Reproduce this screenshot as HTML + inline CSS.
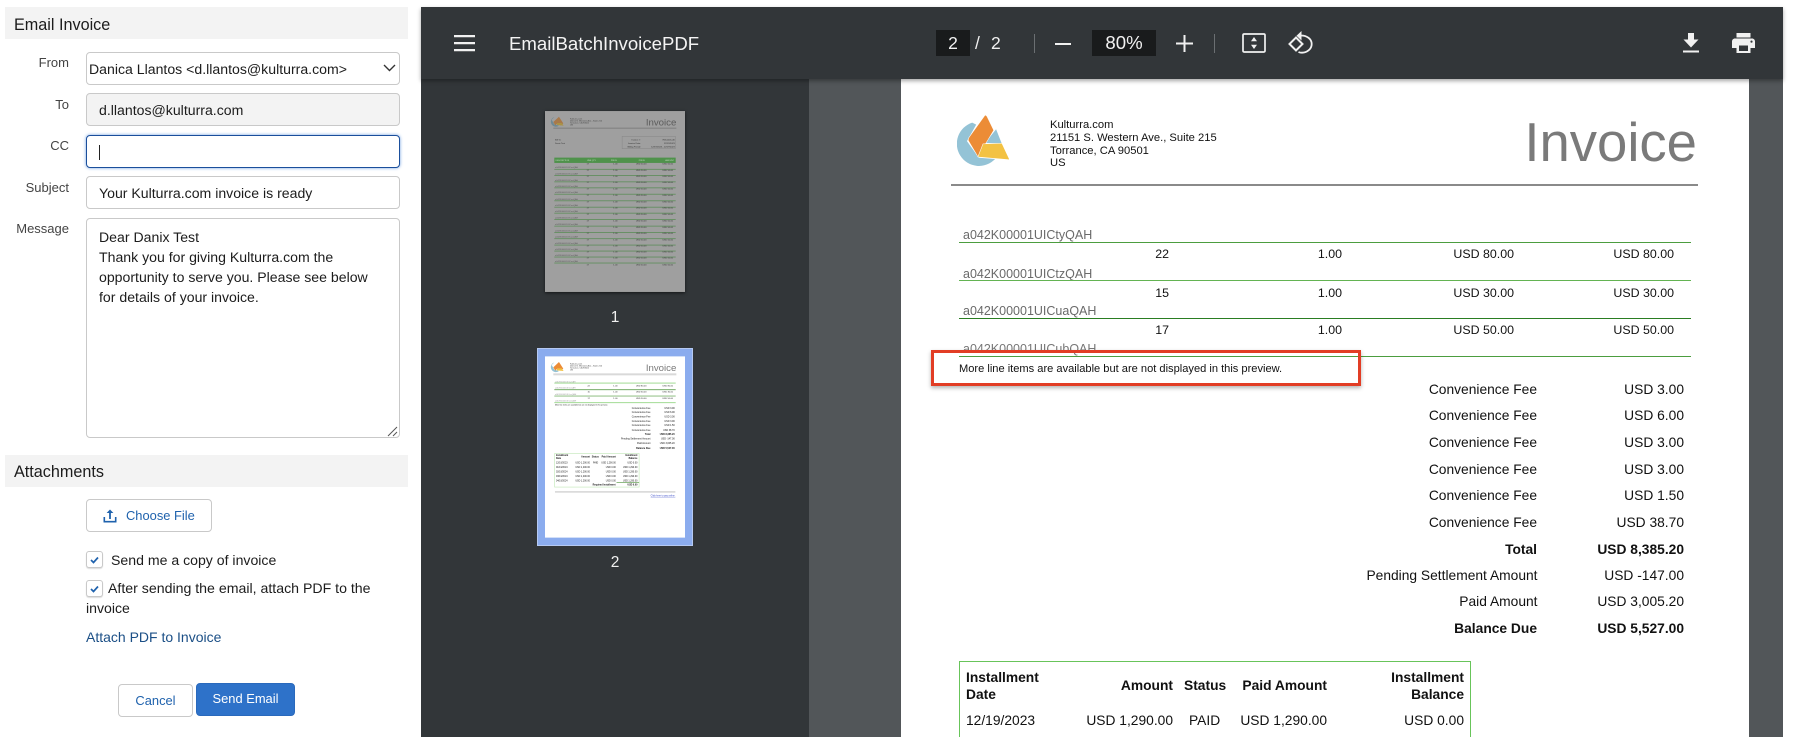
<!DOCTYPE html>
<html lang="en"><head><meta charset="utf-8"><title>Email Invoice</title>
<style>
html,body{margin:0;padding:0;background:#fff}
body{width:1793px;height:756px;position:relative;overflow:hidden;font-family:"Liberation Sans",sans-serif;color:#1c1c1c}
.a{position:absolute;white-space:nowrap;line-height:20px}
.box{position:absolute;box-sizing:border-box;background:#fff;border:1px solid #c9c9c9;border-radius:4px;left:86px;width:314px;height:33px}
.lb{right:1724px;font-size:13px;color:#444}
.in{left:99px;font-size:14.1px}
.bar{position:absolute;left:5px;width:403px;height:32px;background:#f3f3f3}
.pg{position:absolute;left:901px;width:848px;top:79px;height:658px;background:#fff}
.n{font-size:12.5px;color:#6a6a6a;left:963px}
.v{font-size:12.4px;color:#111}
.gl{position:absolute;left:959px;width:732px;height:1px;background:#4c9d3f}
.f{font-size:13.8px;color:#111}
.b{font-weight:bold}
svg{position:absolute;display:block}
svg text{font-family:"Liberation Sans",sans-serif}
</style></head><body>

<!-- LEFT PANEL -->
<div class="bar" style="top:7px"></div>
<div class="a" style="left:14px;top:15px;font-size:16.2px">Email Invoice</div>

<div class="a lb" style="top:53px">From</div>
<div class="box" style="top:52px"></div>
<div class="a" style="left:89px;top:59px;font-size:14.1px">Danica Llantos &lt;d.llantos@kulturra.com&gt;</div>
<svg style="left:383px;top:63px" width="13" height="10" viewBox="0 0 13 10"><path d="M1 2l5.500 5.500L12 2" fill="none" stroke="#333" stroke-width="1.400"/></svg>

<div class="a lb" style="top:95px">To</div>
<div class="box" style="top:93px;background:#f3f3f3"></div>
<div class="a in" style="top:100px">d.llantos@kulturra.com</div>

<div class="a lb" style="top:136px">CC</div>
<div class="box" style="top:135px;border-color:#1b4f9c;box-shadow:0 0 3px #6f9fe0"></div>
<div style="position:absolute;left:99px;top:145px;width:1px;height:15px;background:#222"></div>

<div class="a lb" style="top:178px">Subject</div>
<div class="box" style="top:176px"></div>
<div class="a in" style="top:183px">Your Kulturra.com invoice is ready</div>

<div class="a lb" style="top:219px">Message</div>
<div class="box" style="top:218px;height:220px"></div>
<div class="a in" style="top:227px">Dear Danix Test</div>
<div class="a in" style="top:247px">Thank you for giving Kulturra.com the</div>
<div class="a in" style="top:267px">opportunity to serve you. Please see below</div>
<div class="a in" style="top:287px">for details of your invoice.</div>
<svg style="left:387px;top:425px" width="12" height="12" viewBox="0 0 12 12"><path d="M1 11L10 2M6 11L10 7" stroke="#555" stroke-width="1" fill="none"/></svg>

<div class="bar" style="top:455px"></div>
<div class="a" style="left:14px;top:462px;font-size:16.2px">Attachments</div>

<div class="box" style="top:499px;width:126px"></div>
<svg style="left:102px;top:508px" width="16" height="16" viewBox="0 0 16 16"><path d="M8 1.500L4.600 5h2.500v6h1.800V5h2.500zM1.500 9v5.500h13V9h-1.600v3.900H3.100V9z" fill="#1f62ad"/></svg>
<div class="a" style="left:126px;top:506px;font-size:12.9px;color:#1f62ad">Choose File</div>

<div class="box" style="top:551px;width:17px;height:17px;border-radius:3px;box-shadow:0 1px 1px #ddd"></div>
<svg style="left:88px;top:553px" width="13" height="13" viewBox="0 0 13 13"><path d="M3 7l2.500 2.500L10 4.500" fill="none" stroke="#1f62ad" stroke-width="1.700"/></svg>
<div class="a" style="left:111px;top:550px;font-size:14.1px">Send me a copy of invoice</div>

<div class="box" style="top:580px;width:17px;height:17px;border-radius:3px;box-shadow:0 1px 1px #ddd"></div>
<svg style="left:88px;top:582px" width="13" height="13" viewBox="0 0 13 13"><path d="M3 7l2.500 2.500L10 4.500" fill="none" stroke="#1f62ad" stroke-width="1.700"/></svg>
<div class="a" style="left:108px;top:577.500px;font-size:14.15px">After sending the email, attach PDF to the</div>
<div class="a" style="left:86px;top:597.500px;font-size:14.1px">invoice</div>
<div class="a" style="left:86px;top:627px;font-size:14px;color:#1b4f86">Attach PDF to Invoice</div>

<div class="box" style="left:118px;top:684px;width:75px;height:33px"></div>
<div class="a" style="left:118px;width:75px;text-align:center;top:691px;font-size:12.9px;color:#1f62ad">Cancel</div>
<div class="box" style="left:196px;top:683px;width:99px;height:33px;background:#2e72c9;border-color:#2a69bc"></div>
<div class="a" style="left:196px;width:99px;text-align:center;top:689px;font-size:12.9px;color:#fff">Send Email</div>

<!-- VIEWER -->
<div style="position:absolute;left:421px;top:7px;width:1362px;height:730px;background:#525659"></div>
<div style="position:absolute;left:421px;top:79px;width:388px;height:658px;background:#323639"></div>
<div class="pg"></div>
<div style="position:absolute;left:421px;top:7px;width:1362px;height:72px;background:#323639;box-shadow:0 2px 4px rgba(0,0,0,.35)"></div>

<svg style="left:454px;top:35px" width="21" height="17" viewBox="0 0 21 17"><path d="M0 0h21v2.200H0zM0 7h21v2.200H0zM0 14h21v2.200H0z" fill="#f1f1f1"/></svg>
<div class="a" style="left:509px;top:34px;font-size:18.6px;color:#f4f4f4">EmailBatchInvoicePDF</div>

<div style="position:absolute;left:936px;top:30px;width:34px;height:26px;background:#191b1c"></div>
<div class="a" style="left:936px;width:34px;text-align:center;top:33px;font-size:17.5px;color:#f1f1f1">2</div>
<div class="a" style="left:975px;top:33px;font-size:17.5px;color:#f1f1f1">/</div>
<div class="a" style="left:991px;top:33px;font-size:17.5px;color:#f1f1f1">2</div>
<div style="position:absolute;left:1034px;top:34px;width:1px;height:19px;background:#6b6f72"></div>
<div style="position:absolute;left:1055px;top:43px;width:16px;height:2px;background:#f1f1f1"></div>
<div style="position:absolute;left:1092px;top:30px;width:64px;height:26px;background:#191b1c"></div>
<div class="a" style="left:1092px;width:64px;text-align:center;top:33px;font-size:18.6px;color:#f1f1f1">80%</div>
<svg style="left:1176px;top:35px" width="17" height="17" viewBox="0 0 17 17"><path d="M7.500 0h2v7.500H17v2H9.500V17h-2V9.500H0v-2h7.500z" fill="#f1f1f1"/></svg>
<div style="position:absolute;left:1214px;top:34px;width:1px;height:19px;background:#6b6f72"></div>

<svg style="left:1242px;top:33px" width="24" height="20" viewBox="0 0 24 20"><rect x="1" y="1" width="22" height="18" rx="1.200" fill="none" stroke="#f1f1f1" stroke-width="1.700"/><path d="M12 4l3 4.200H9zM12 16l-3-4.200h6z" fill="#f1f1f1"/></svg>
<svg style="left:1288px;top:30px" width="26" height="24" viewBox="0 0 26 24"><path d="M8 7.500l6.500 6.500L8 20.500 1.500 14z" fill="none" stroke="#f1f1f1" stroke-width="2"/><path d="M13 5.500C19 5.500 23.700 9 23.700 14 23.700 19 19 22.700 14 22.700 12.500 22.700 11.500 22.500 10.500 22" fill="none" stroke="#f1f1f1" stroke-width="1.800"/><path d="M13.500 1v9.500L8.500 5.700z" fill="#f1f1f1"/></svg>
<svg style="left:1683px;top:33px" width="16" height="20" viewBox="0 0 16 20"><path d="M5 0h6v6.500h4.500L8 14.500.5 6.500H5zM0 17.500h16V19.500H0z" fill="#f1f1f1"/></svg>
<svg style="left:1732px;top:33px" width="23" height="20" viewBox="0 0 23 20"><path d="M4.500 0h14v4.500h-14zM3 5.500h17c1.700 0 3 1.300 3 3V15h-4.500v5h-14v-5H0V8.500c0-1.700 1.300-3 3-3zM7 12.500V18h9V12.500zM19.500 7.500a1.100 1.100 0 1 0 0 2.200 1.100 1.100 0 0 0 0-2.200z" fill="#f1f1f1" fill-rule="evenodd"/></svg>

<!-- THUMB 1 -->
<svg style="left:545px;top:111px;box-shadow:0 1px 3px rgba(0,0,0,.6)" width="140" height="181" viewBox="0 0 421 544">
<rect width="421" height="544" fill="#9f9f9f"/>
<path d="M28 18a15 15 0 1 0 14 26l-14-4-8-14z" fill="#6e8a95"/><path d="M42 17l13 20-8 6-10-6-6 6-6-10z" fill="#a8794a"/><path d="M36 36h14l6 8-20-2z" fill="#aa9244"/>
<g fill="#3c3c3c" font-size="6.500"><text x="75" y="25">Kulturra.com</text><text x="75" y="31">21151 S. Western Ave., Suite 215</text><text x="75" y="37">Torrance, CA 90501</text><text x="75" y="43">US</text></g>
<text x="395" y="43" font-size="29" fill="#5c5c5c" text-anchor="end">Invoice</text>
<rect x="25" y="50" width="370" height="3" fill="#7f7f7f"/>
<g fill="#333" font-size="6.500"><text x="30" y="88">Bill To:</text><text x="30" y="99">Danix Test</text></g>
<rect x="232" y="76" width="160" height="37" fill="none" stroke="#878787" stroke-width="1.500"/>
<g fill="#2c2c2c" font-size="6.500" text-anchor="end"><text x="288" y="88">Invoice #:</text><text x="390" y="88">INV-0001-46</text><text x="288" y="99">Invoice Date:</text><text x="390" y="99">12/19/2023</text><text x="288" y="110">Billing Period:</text><text x="390" y="110">12/19/2023 - 12/19/2023</text></g>
<rect x="28" y="140" width="365" height="16" fill="#4f924b"/>
<g fill="#c8dcc6" font-size="6"><text x="32" y="150">DESCRIPTION</text><text x="126" y="150">LINE QTY</text><text x="198" y="150">PRICE</text><text x="282" y="150">PRICE</text><text x="362" y="150">AMOUNT</text></g>
<defs><g id="r1"><g fill="#2f2f2f" font-size="6.500" text-anchor="end"><text x="132" y="0">17</text><text x="218" y="0">1.00</text><text x="305" y="0">USD 50.00</text><text x="385" y="0">USD 50.00</text></g><text x="30" y="11" font-size="6.500" fill="#5a5a5a">a042K00001UICuaQAH</text><rect x="28" y="13" width="365" height="2" fill="#4f8a4b"/></g></defs>
<use href="#r1" y="161"/><use href="#r1" y="180"/><use href="#r1" y="199"/><use href="#r1" y="217"/><use href="#r1" y="236"/><use href="#r1" y="256"/><use href="#r1" y="275"/><use href="#r1" y="293"/><use href="#r1" y="312"/><use href="#r1" y="332"/><use href="#r1" y="351"/><use href="#r1" y="370"/><use href="#r1" y="389"/><use href="#r1" y="407"/><use href="#r1" y="425"/><use href="#r1" y="443"/>
<g fill="#2f2f2f" font-size="6.500" text-anchor="end"><text x="132" y="464">17</text><text x="218" y="464">1.00</text><text x="305" y="464">USD 50.00</text><text x="385" y="464">USD 50.00</text></g>
</svg>
<div class="a" style="left:545px;width:140px;text-align:center;top:308px;font-size:15.500px;color:#f1f1f1">1</div>

<!-- THUMB 2 -->
<div style="position:absolute;left:537px;top:348px;width:156px;height:198px;background:#8bacee;box-shadow:inset 0 0 0 1px #b5c9f2"></div>
<svg style="left:545px;top:356px" width="140" height="182" viewBox="0 0 421 545">
<rect width="421" height="545" fill="#fff"/>
<path d="M28 18a15 15 0 1 0 14 26l-14-4-8-14z" fill="#94c3d6"/><path d="M42 17l13 20-8 6-10-6-6 6-6-10z" fill="#ec8c36"/><path d="M36 36h14l6 8-20-2z" fill="#f3c243"/>
<g fill="#333" font-size="6.500"><text x="75" y="25">Kulturra.com</text><text x="75" y="31">21151 S. Western Ave., Suite 215</text><text x="75" y="37">Torrance, CA 90501</text><text x="75" y="43">US</text></g>
<text x="395" y="44" font-size="29" fill="#7a7a7a" text-anchor="end">Invoice</text>
<rect x="25" y="51" width="370" height="6" fill="#d9d9d9"/>
<g font-size="6" fill="#999"><text x="30" y="78">a042K00001UICtyQAH</text><text x="30" y="97">a042K00001UICtzQAH</text><text x="30" y="116">a042K00001UICuaQAH</text><text x="30" y="135">a042K00001UICubQAH</text></g>
<rect x="28" y="79" width="365" height="2.500" fill="#8fd47f"/><rect x="28" y="99" width="365" height="2.500" fill="#589a47"/><rect x="28" y="118" width="365" height="2.500" fill="#78b36a"/><rect x="28" y="138" width="365" height="2.500" fill="#8fd47f"/>
<g fill="#222" font-size="6.500" text-anchor="end"><text x="135" y="90">22</text><text x="218" y="90">1.00</text><text x="305" y="90">USD 80.00</text><text x="385" y="90">USD 80.00</text><text x="135" y="109">15</text><text x="218" y="109">1.00</text><text x="305" y="109">USD 30.00</text><text x="385" y="109">USD 30.00</text><text x="135" y="128">17</text><text x="218" y="128">1.00</text><text x="305" y="128">USD 50.00</text><text x="385" y="128">USD 50.00</text></g>
<text x="30" y="147" font-size="5.500" fill="#111">More line items are available but are not displayed in this preview.</text>
<g fill="#111" font-size="7.200" text-anchor="end"><text x="317" y="158">Convenience Fee</text><text x="390" y="158">USD 3.00</text><text x="317" y="171">Convenience Fee</text><text x="390" y="171">USD 6.00</text><text x="317" y="184">Convenience Fee</text><text x="390" y="184">USD 3.00</text><text x="317" y="197">Convenience Fee</text><text x="390" y="197">USD 3.00</text><text x="317" y="210">Convenience Fee</text><text x="390" y="210">USD 1.50</text><text x="317" y="224">Convenience Fee</text><text x="390" y="224">USD 38.70</text><text x="317" y="237" font-weight="bold">Total</text><text x="390" y="237" font-weight="bold">USD 8,385.20</text><text x="317" y="250">Pending Settlement Amount</text><text x="390" y="250">USD -147.00</text><text x="317" y="264">Paid Amount</text><text x="390" y="264">USD 3,005.20</text><text x="317" y="278" font-weight="bold">Balance Due</text><text x="390" y="278" font-weight="bold">USD 5,527.00</text></g>
<rect x="29" y="292" width="254" height="101" fill="none" stroke="#c5eabb" stroke-width="2"/>
<g fill="#111" font-size="7"><text x="33" y="300" font-weight="bold">Installment</text><text x="33" y="308" font-weight="bold">Date</text><text x="33" y="322">12/19/2023</text><text x="33" y="335">01/19/2024</text><text x="33" y="349">02/19/2024</text><text x="33" y="363">03/19/2024</text><text x="33" y="376">04/19/2024</text></g>
<g fill="#111" font-size="7" text-anchor="end"><text x="135" y="304" font-weight="bold">Amount</text><text x="162" y="304" font-weight="bold">Status</text><text x="213" y="304" font-weight="bold">Paid Amount</text><text x="278" y="300" font-weight="bold">Installment</text><text x="278" y="308" font-weight="bold">Balance</text><text x="135" y="322">USD 1,290.00</text><text x="160" y="322">PAID</text><text x="213" y="322">USD 1,290.00</text><text x="278" y="322">USD 0.00</text><text x="135" y="335">USD 1,290.00</text><text x="213" y="335">USD 0.00</text><text x="278" y="335">USD 1,290.00</text><text x="135" y="349">USD 1,290.00</text><text x="213" y="349">USD 0.00</text><text x="278" y="349">USD 1,290.00</text><text x="135" y="363">USD 1,290.00</text><text x="213" y="363">USD 0.00</text><text x="278" y="363">USD 1,290.00</text><text x="135" y="376">USD 1,290.00</text><text x="213" y="376">USD 0.00</text><text x="278" y="376">USD 1,290.00</text><text x="212" y="388" font-weight="bold">Required Installment</text><text x="278" y="388" font-weight="bold">USD 0.00</text></g>
<rect x="215" y="378" width="68" height="2" fill="#589a47"/>
<rect x="30" y="405" width="362" height="5" fill="#d9d9d9"/>
<text x="392" y="422" font-size="7" fill="#2c3fc5" text-anchor="end" text-decoration="underline">Click here to pay online.</text>
</svg>
<div class="a" style="left:545px;width:140px;text-align:center;top:553px;font-size:15.500px;color:#f1f1f1">2</div>

<!-- PAGE CONTENT -->
<svg style="left:957px;top:115px" width="53" height="51" viewBox="0 0 160 152">
<path d="M46 22A67 67 0 1 0 115 132L66 128 30 78 58 28z" fill="#94c3d6"/>
<path d="M118 42l17 43-50-2z" fill="#94c3d6"/>
<path d="M85 0q3 0 5 4l20 41L63 123 35 76Q34 72 37 67z" fill="#ec8c36" stroke="#fff" stroke-width="3" paint-order="stroke"/>
<path d="M79 87l56-2 22 47q0 2-2 1l-91-8z" fill="#f3c243" stroke="#fff" stroke-width="3" paint-order="stroke"/>
</svg>
<div class="a" style="left:1050px;top:115px;font-size:11.200px;color:#111">Kulturra.com</div>
<div class="a" style="left:1050px;top:128px;font-size:11.200px;color:#111">21151 S. Western Ave., Suite 215</div>
<div class="a" style="left:1050px;top:141px;font-size:11.200px;color:#111">Torrance, CA 90501</div>
<div class="a" style="left:1050px;top:153px;font-size:11.200px;color:#111">US</div>
<div class="a" style="right:96px;top:118px;font-size:54.500px;line-height:50px;color:#7a7a7a">Invoice</div>
<div style="position:absolute;left:951px;top:184px;width:747px;height:2px;background:#8a8a8a"></div>

<div class="a n" style="top:225px">a042K00001UICtyQAH</div>
<div class="gl" style="top:241.500px"></div>
<div class="a n" style="top:263.500px">a042K00001UICtzQAH</div>
<div class="gl" style="top:279.500px;background:#63b352"></div>
<div class="a n" style="top:301px">a042K00001UICuaQAH</div>
<div class="gl" style="top:318px;background:#2a7d22"></div>
<div class="a n" style="top:339px;color:#777">a042K00001UICubQAH</div>
<div class="gl" style="top:356px"></div>

<div class="a v" style="right:624px;top:244px">22</div><div class="a v" style="right:451px;top:244px">1.00</div><div class="a v" style="right:279px;top:244px">USD 80.00</div><div class="a v" style="right:119px;top:244px">USD 80.00</div>
<div class="a v" style="right:624px;top:282.500px">15</div><div class="a v" style="right:451px;top:282.500px">1.00</div><div class="a v" style="right:279px;top:282.500px">USD 30.00</div><div class="a v" style="right:119px;top:282.500px">USD 30.00</div>
<div class="a v" style="right:624px;top:320px">17</div><div class="a v" style="right:451px;top:320px">1.00</div><div class="a v" style="right:279px;top:320px">USD 50.00</div><div class="a v" style="right:119px;top:320px">USD 50.00</div>

<div style="position:absolute;left:931px;top:350px;width:430px;height:36px;box-sizing:border-box;border:3px solid #e23d25;box-shadow:0 2px 4px rgba(0,0,0,.3)"></div>
<div class="a" style="left:959px;top:359px;font-size:11.100px;color:#111">More line items are available but are not displayed in this preview.</div>

<div class="a f" style="right:256px;top:380px">Convenience Fee</div><div class="a f" style="right:109px;top:380px">USD 3.00</div>
<div class="a f" style="right:256px;top:406px">Convenience Fee</div><div class="a f" style="right:109px;top:406px">USD 6.00</div>
<div class="a f" style="right:256px;top:433px">Convenience Fee</div><div class="a f" style="right:109px;top:433px">USD 3.00</div>
<div class="a f" style="right:256px;top:459.500px">Convenience Fee</div><div class="a f" style="right:109px;top:459.500px">USD 3.00</div>
<div class="a f" style="right:256px;top:486px">Convenience Fee</div><div class="a f" style="right:109px;top:486px">USD 1.50</div>
<div class="a f" style="right:256px;top:512.500px">Convenience Fee</div><div class="a f" style="right:109px;top:512.500px">USD 38.70</div>
<div class="a f b" style="right:256px;top:539.500px">Total</div><div class="a f b" style="right:109px;top:539.500px">USD 8,385.20</div>
<div class="a f" style="right:255.500px;top:566px">Pending Settlement Amount</div><div class="a f" style="right:109px;top:566px">USD -147.00</div>
<div class="a f" style="right:255.500px;top:592px">Paid Amount</div><div class="a f" style="right:109px;top:592px">USD 3,005.20</div>
<div class="a f b" style="right:256px;top:619px">Balance Due</div><div class="a f b" style="right:109px;top:619px">USD 5,527.00</div>

<div style="position:absolute;left:959px;top:661px;width:512px;height:76px;box-sizing:border-box;border:1px solid #68c45a;border-bottom:0"></div>
<div class="a f b" style="left:966px;top:667.500px">Installment</div>
<div class="a f b" style="left:966px;top:684.500px">Date</div>
<div class="a f b" style="right:620px;top:676px">Amount</div>
<div class="a f b" style="left:1184px;top:676px">Status</div>
<div class="a f b" style="right:466px;top:676px">Paid Amount</div>
<div class="a f b" style="right:329px;top:667.500px">Installment</div>
<div class="a f b" style="right:329px;top:684.500px">Balance</div>
<div class="a f" style="left:966px;top:711px">12/19/2023</div>
<div class="a f" style="right:620px;top:711px">USD 1,290.00</div>
<div class="a f" style="left:1189px;top:711px">PAID</div>
<div class="a f" style="right:466px;top:711px">USD 1,290.00</div>
<div class="a f" style="right:329px;top:711px">USD 0.00</div>
</body></html>
